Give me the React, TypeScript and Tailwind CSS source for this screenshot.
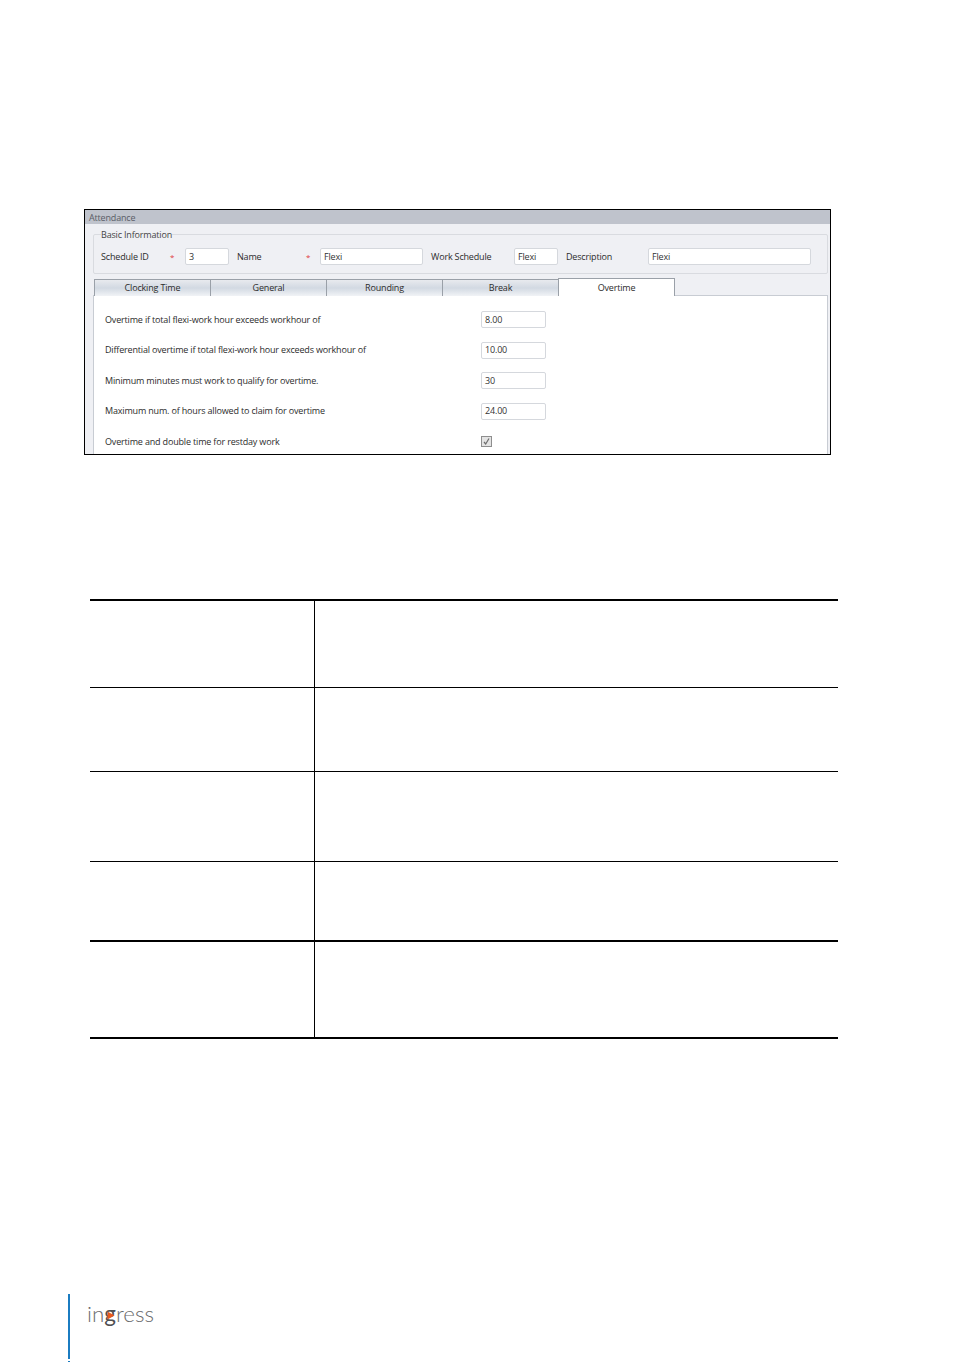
const font = "font-['Open_Sans','Liberation_Sans',sans-serif]";

const fields = [
  { label: "Overtime if total flexi-work hour exceeds workhour of", value: "8.00" },
  { label: "Differential overtime if total flexi-work hour exceeds workhour of", value: "10.00" },
  { label: "Minimum minutes must work to qualify for overtime.", value: "30" },
  { label: "Maximum num. of hours allowed to claim for overtime", value: "24.00" },
];

const tabs = ["Clocking Time", "General", "Rounding", "Break"];

const tableRows = [
  { h: "h-[86px]", line: "border-b" },
  { h: "h-[83px]", line: "border-b" },
  { h: "h-[89px]", line: "border-b" },
  { h: "h-[78px]", line: "border-b-2" },
  { h: "h-[95px]", line: "border-b-2" },
];

const Box = ({ value, className }: { value: string; className: string }) => (
  <div className={`h-[17px] flex items-center pl-[3px] bg-white border border-[#d5d8dd] rounded-[2px] text-[#333] ${className}`}>
    {value}
  </div>
);

const Star = ({ className }: { className: string }) => (
  <span className={`text-[#e0393e] text-[8px] ${className}`}>*</span>
);

const Attendance = () => (
  <div className={`ml-[84px] w-[747px] h-[246px] border border-black bg-[#eff0f4] overflow-hidden text-[9px] tracking-[-0.17px] text-[#2c2c2c] ${font}`}>
    <div className="h-[14px] bg-[#bfc3cc] pl-1 leading-[15px] text-[#5a5d66]">Attendance</div>

    {/* Basic information */}
    <fieldset className="ml-2 mt-[5px] w-[735px] h-[45px] border border-[#d9dbe0] rounded-[2px] pl-[7px]">
      <legend className="px-0 leading-[11px] text-[#444]">Basic Information</legend>
      <div className="flex items-center mt-[8px]">
        <span className="w-[69px]">Schedule ID</span>
        <Star className="w-[15px]" />
        <Box value="3" className="w-[44px]" />
        <span className="w-[69px] ml-2">Name</span>
        <Star className="w-[14px]" />
        <Box value="Flexi" className="w-[103px]" />
        <span className="w-[83px] ml-2">Work Schedule</span>
        <Box value="Flexi" className="w-[44px]" />
        <span className="w-[82px] ml-2">Description</span>
        <Box value="Flexi" className="w-[163px]" />
      </div>
    </fieldset>

    {/* Tabs */}
    <div className="flex items-end h-[18px] mt-[4px] ml-[9px] relative z-10">
      <div className="w-px h-[17px] bg-[#9aa0a8]" />
      {tabs.map((t) => (
        <div
          key={t}
          className="w-[116px] h-[17px] flex items-center justify-center border-t border-r border-[#9aa0a8] bg-gradient-to-b from-[#e8eaee] via-[#d2d9e2] to-[#f1f3f6]"
        >
          {t}
        </div>
      ))}
      <div className="w-[117px] h-[18px] -ml-px flex items-center justify-center pt-px bg-white border-t border-x border-[#9aa0a8]">
        Overtime
      </div>
    </div>

    {/* Overtime panel */}
    <div className="-mt-px ml-2 w-[735px] h-[161px] bg-white border-t border-x border-[#c8ccd3] pl-[11px] pt-[15px]">
      {fields.map((f) => (
        <div key={f.label} className="flex items-center h-[17px] mb-[13.5px]">
          <span className="w-[376px]">{f.label}</span>
          <Box value={f.value} className="w-[65px] border-[#bcc0c6]" />
        </div>
      ))}
      <div className="flex items-center h-[17px]">
        <span className="w-[376px]">Overtime and double time for restday work</span>
        <div className="w-[11px] h-[11px] border border-[#8e8e8e] bg-[#e4e4e4] flex items-center justify-center">
          <svg width="9" height="9" viewBox="0 0 9 9" fill="none" stroke="#6d6d6d" strokeWidth="1.2">
            <path d="M2 5l1.7 2L7 1.5" />
          </svg>
        </div>
      </div>
    </div>
  </div>
);

const EmptyTable = () => (
  <div className="ml-[90px] mt-[144px] w-[748px] border-t-2 border-black">
    {tableRows.map((r, i) => (
      <div key={i} className={`flex box-content ${r.h} ${r.line} border-black`}>
        <div className="w-[224px] border-r border-black box-content" />
        <div className="flex-1" />
      </div>
    ))}
  </div>
);

const Footer = () => (
  <div className="flex mt-auto ml-[68px] h-[68px]">
    <div className="flex flex-col">
      <div className="w-[2px] h-[65px] bg-[#1b7cc1]" />
      <div className="w-[2px] h-px mt-[2px] bg-[#1b7cc1]" />
    </div>
    <div className="relative ml-[17px] mt-[5px] h-[30px] text-[22.4px] leading-[30px] font-light text-[#6a6b6d] font-['Lato','Open_Sans',sans-serif]">
      in<span className="text-[#4f5052] font-normal">g</span>ress
      {/* orange play mark sitting in the g */}
      <svg className="absolute left-[20px] top-[12px]" width="8" height="9" viewBox="0 0 8 9">
        <path d="M0.5 0.5L7.5 4.5L0.5 8.5Z" fill="#e8591c" />
      </svg>
    </div>
  </div>
);

export default function App() {
  return (
    <div className="w-[954px] h-[1362px] bg-white flex flex-col pt-[209px] overflow-hidden">
      <Attendance />
      <EmptyTable />
      <Footer />
    </div>
  );
}
